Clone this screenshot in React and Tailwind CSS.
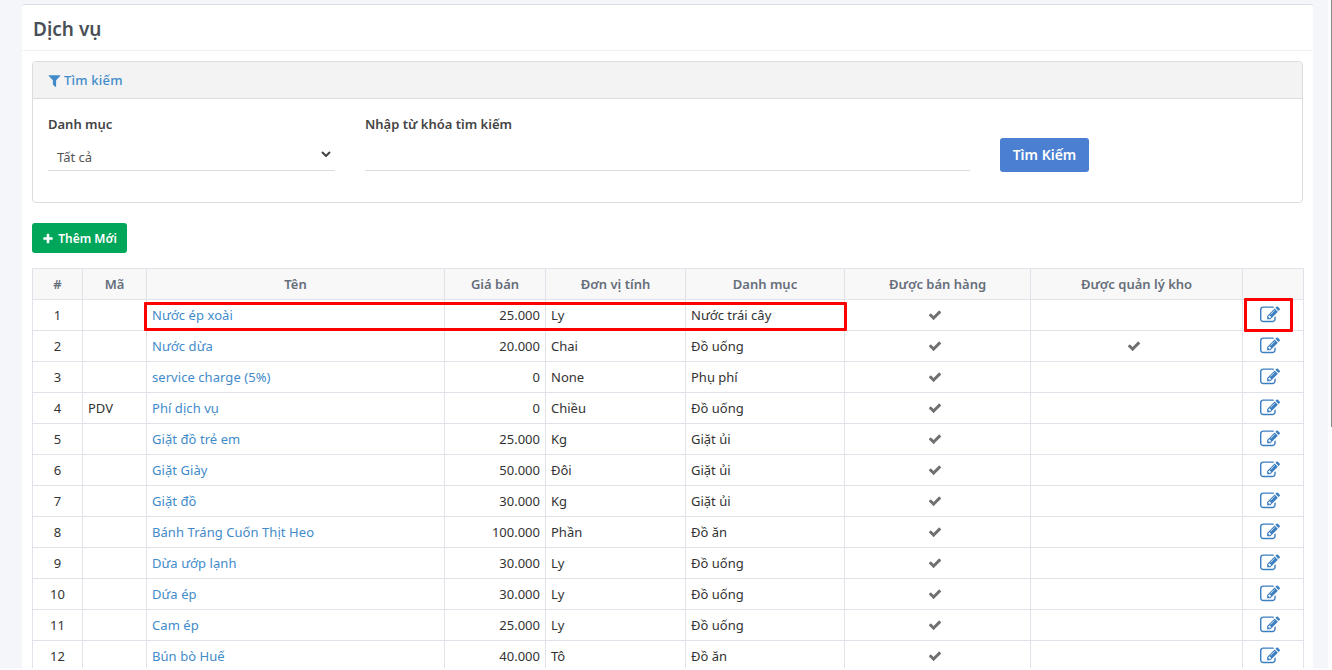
import React from "react";

const rows = [
  ["1", "", "Nước ép xoài", "25.000", "Ly", "Nước trái cây", true, false],
  ["2", "", "Nước dừa", "20.000", "Chai", "Đồ uống", true, true],
  ["3", "", "service charge (5%)", "0", "None", "Phụ phí", true, false],
  ["4", "PDV", "Phí dịch vụ", "0", "Chiều", "Đồ uống", true, false],
  ["5", "", "Giặt đồ trẻ em", "25.000", "Kg", "Giặt ủi", true, false],
  ["6", "", "Giặt Giày", "50.000", "Đôi", "Giặt ủi", true, false],
  ["7", "", "Giặt đồ", "30.000", "Kg", "Giặt ủi", true, false],
  ["8", "", "Bánh Tráng Cuốn Thịt Heo", "100.000", "Phần", "Đồ ăn", true, false],
  ["9", "", "Dừa ướp lạnh", "30.000", "Ly", "Đồ uống", true, false],
  ["10", "", "Dứa ép", "30.000", "Ly", "Đồ uống", true, false],
  ["11", "", "Cam ép", "25.000", "Ly", "Đồ uống", true, false],
  ["12", "", "Bún bò Huế", "40.000", "Tô", "Đồ ăn", true, false],
];

const heads = ["#", "Mã", "Tên", "Giá bán", "Đơn vị tính", "Danh mục", "Được bán hàng", "Được quản lý kho", ""];
const th = "border border-[#e1e3ea] h-[31px] p-0 pt-[2px] text-center font-semibold text-[#666e7a] text-[13px]";
const cell = "border border-[#e1e3ea] h-[31px] px-[5px] text-[13px] text-[#333]";
const td = cell + " pt-[2px] pb-0";
const iconTd = cell + " py-0";

const Fa = ({ d, className }) => (
  <svg viewBox="0 0 1792 1792" fill="currentColor" className={className}>
    <path d={d} />
  </svg>
);
const CHECK = "M1671 566q0 40-28 68l-724 724-136 136q-28 28-68 28t-68-28l-136-136-362-362q-28-28-28-68t28-68l136-136q28-28 68-28t68 28l294 295 656-657q28-28 68-28t68 28l136 136q28 28 28 68z";
const EDIT = "M888 1184l116-116-152-152-116 116v56h96v96h56zm440-720q-16-16-33 1l-350 350q-17 17-1 33t33-1l350-350q17-17 1-33zm80 594v190q0 119-84.5 203.5t-203.5 84.5h-832q-119 0-203.5-84.5t-84.5-203.5v-832q0-119 84.5-203.5t203.5-84.5h832q63 0 117 25 15 7 18 23 3 17-9 29l-49 49q-14 14-32 8-23-6-45-6h-832q-66 0-113 47t-47 113v832q0 66 47 113t113 47h832q66 0 113-47t47-113v-126q0-13 9-22l64-64q15-15 35-7t20 29zm-96-738l288 288-672 672h-288v-288zm444 132l-92 92-288-288 92-92q28-28 68-28t68 28l152 152q28 28 28 68t-28 68z";
const FILTER = "M1595 295q17 41-14 70l-493 493v742q0 42-39 59-13 5-25 5-27 0-45-19l-256-256q-19-19-19-45v-486l-493-493q-31-29-14-70 17-39 59-39h1280q42 0 59 39z";
const PLUS = "M1600 736v192q0 40-28 68t-68 28h-416v416q0 40-28 68t-68 28h-192q-40 0-68-28t-28-68v-416h-416q-40 0-68-28t-28-68v-192q0-40 28-68t68-28h416v-416q0-40 28-68t68-28h192q40 0 68 28t28 68v416h416q40 0 68 28t28 68z";

export default function App() {
  return (
    <div className="h-[670px] w-[1332px] overflow-hidden bg-white [font-family:'Noto_Sans','Open_Sans',sans-serif]">
      <div className="flex h-[668px]">
        <div className="h-[668px] w-[1328px] overflow-hidden bg-[#f4f6fa] pl-[22px] pr-[15px] pt-[4px]">
          <div className="h-[700px] w-[1291px] rounded-t-[3px] border-t border-[#d8dde6] bg-white">
            <div className="flex h-[46px] items-center border-b border-[#f0f1f3] pl-[11px] pt-[4px]">
              <h1 className="text-[19px] font-semibold text-[#4a4f57]">Dịch vụ</h1>
            </div>
            <div className="px-[10px] pt-[10px]">
              <div className="h-[142px] rounded-[4px] border border-[#dcdcdc]">
                <div className="flex h-[37px] items-center gap-[2px] rounded-t-[4px] border-b border-[#dcdcdc] bg-[#f3f3f3] pl-[14px] pt-[2px] text-[13px] font-medium tracking-[0.2px] text-[#428bca]">
                  <Fa d={FILTER} className="mb-[2px] size-[15px]" />
                  <span>Tìm kiếm</span>
                </div>
                <div className="flex pl-[15px] pt-[16px]">
                  <div className="w-[287px]">
                    <div className="text-[13px] font-semibold leading-[18px] text-[#444]">Danh mục</div>
                    <div className="mt-[10px] flex h-[28px] items-center justify-between border-b border-[#dcdcdc] pl-[9px] pr-[3px] pt-[2px] text-[13px] text-[#555]">
                      <span>Tất cả</span>
                      <svg viewBox="0 0 10 6" className="mb-[7px] mr-[1px] h-[6px] w-[10px] text-[#444]" fill="none" stroke="currentColor" strokeWidth="2">
                        <path d="M1 1l4 4 4-4" />
                      </svg>
                    </div>
                  </div>
                  <div className="ml-[30px] w-[605px]">
                    <div className="text-[13px] font-semibold leading-[18px] text-[#444]">Nhập từ khóa tìm kiếm</div>
                    <div className="mt-[10px] h-[28px] border-b border-[#dcdcdc]" />
                  </div>
                  <button className="ml-[30px] mt-[23px] h-[34px] w-[89px] rounded-[3px] bg-[#4a7fd1] pb-[2px] text-[14px] font-semibold text-white">Tìm Kiếm</button>
                </div>
              </div>
              <button className="mt-[20px] flex h-[30px] w-[95px] items-center justify-center gap-[4px] rounded-[3px] bg-[#00a65a] pt-[1px] text-[12px] font-semibold text-white">
                <Fa d={PLUS} className="size-[12px]" />
                Thêm Mới
              </button>
              <div className="relative mt-[15px] w-[1271px]">
                <table className="w-[1271px] table-fixed border-collapse">
                  <colgroup>
                    <col className="w-[50px]" />
                    <col className="w-[64px]" />
                    <col className="w-[298px]" />
                    <col className="w-[101px]" />
                    <col className="w-[140px]" />
                    <col className="w-[159px]" />
                    <col className="w-[186px]" />
                    <col className="w-[212px]" />
                    <col className="w-[61px]" />
                  </colgroup>
                  <thead>
                    <tr className="bg-[#f8f8f8]">
                      {heads.map((h, i) => (
                        <th key={i} className={th}>{h}</th>
                      ))}
                    </tr>
                  </thead>
                  <tbody>
                    {rows.map((r) => (
                      <tr key={r[0]}>
                        <td className={td + " text-center"}>{r[0]}</td>
                        <td className={td}>{r[1]}</td>
                        <td className={td + " tracking-[0.06px] text-[#428bca]"}>{r[2]}</td>
                        <td className={td + " text-right"}>{r[3]}</td>
                        <td className={td}>{r[4]}</td>
                        <td className={td}>{r[5]}</td>
                        <td className={iconTd}>{r[6] && <Fa d={CHECK} className="ml-[78px] size-[14px] text-[#707070]" />}</td>
                        <td className={iconTd}>{r[7] && <Fa d={CHECK} className="ml-[91px] size-[14px] text-[#707070]" />}</td>
                        <td className={iconTd}><Fa d={EDIT} className="ml-[12px] size-[20px] text-[#3c7fc0]" /></td>
                      </tr>
                    ))}
                  </tbody>
                </table>
                <div className="absolute left-[112px] top-[34px] h-[29px] w-[703px] rounded-[1px] border-[3px] border-[#ff0000]" />
                <div className="absolute left-[1212px] top-[30px] h-[34px] w-[49px] rounded-[1px] border-[3px] border-[#ff0000]" />
              </div>
            </div>
          </div>
        </div>
        <div className="flex h-[668px] w-[4px] justify-end bg-[#fdfdfd]">
          <div className="h-[427px] w-[1px] bg-[#8a8a8a]" />
        </div>
      </div>
    </div>
  );
}
